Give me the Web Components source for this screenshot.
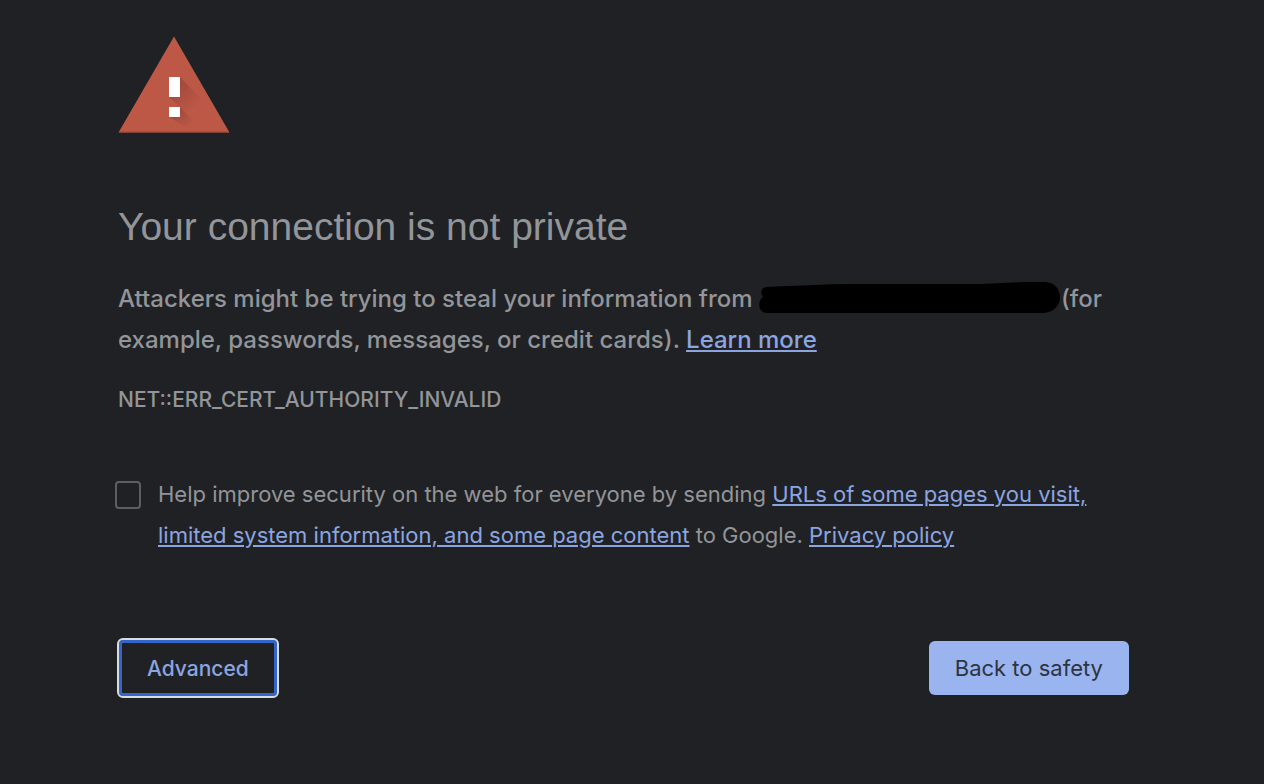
<!DOCTYPE html>
<html lang="en">
<head>
<meta charset="utf-8">
<meta name="viewport" content="width=device-width, initial-scale=1">
<title>Privacy error</title>
<style>
  html { background: #202124; }
  body {
    margin: 0;
    color: #929599;
    font-family: Inter, "Liberation Sans", sans-serif;
    font-weight: 500;
    --link: #8ba5e0;
    --primary: #9ab4f0;
  }
</style>
</head>
<body>
<security-interstitial></security-interstitial>

<script>
class ShadowElement extends HTMLElement {
  constructor() {
    super();
    const template = document.createElement('template');
    template.innerHTML = this.constructor.markup;
    this.attachShadow({ mode: 'open' }).append(template.content.cloneNode(true));
  }
}

class WarningIcon extends ShadowElement {
  static markup = `
    <style>
      :host { display: block; width: 112px; height: 97px; }
      svg { display: block; width: 100%; height: 100%; }
    </style>
    <svg viewBox="0 0 112 97" aria-hidden="true">
      <defs>
        <linearGradient id="shade" gradientUnits="userSpaceOnUse" x1="58" y1="50" x2="77" y2="72">
          <stop offset="0" stop-color="#8f3f34" stop-opacity=".6"/>
          <stop offset="1" stop-color="#8f3f34" stop-opacity="0"/>
        </linearGradient>
        <linearGradient id="shade-dot" gradientUnits="userSpaceOnUse" x1="58" y1="76" x2="70" y2="92">
          <stop offset="0" stop-color="#8f3f34" stop-opacity=".6"/>
          <stop offset="1" stop-color="#8f3f34" stop-opacity="0"/>
        </linearGradient>
      </defs>
      <path d="M56 0.500 111.500 96.500H0.500Z" fill="#bd5847"/>
      <path d="M62 41 84 64 80 88 51 61Z" fill="url(#shade)"/>
      <path d="M62 71 82 92V96H76L51 81Z" fill="url(#shade-dot)"/>
      <path d="M51 41H62V61H51ZM51 71H62V81H51Z" fill="#fff"/>
      <path d="M1 96H111" stroke="#9d4739"/>
    </svg>`;
}
customElements.define('warning-icon', WarningIcon);

class RedactedText extends ShadowElement {
  static markup = `
    <style>
      :host { display: inline-block; width: 302px; height: 32px; vertical-align: -7px; }
      svg { display: block; width: 100%; height: 100%; }
    </style>
    <svg viewBox="0 0 302 32" aria-hidden="true">
      <path d="M7 5 C35 4 65 2 95 2 H215 C240 2 250 0 275 0 H287 C306 2 306 29 285 31 H8 C-1 31 -2 19 4 15 C1 11 2 6 7 5Z"/>
    </svg>`;
}
customElements.define('redacted-text', RedactedText);

class TextLink extends ShadowElement {
  static markup = `
    <style>
      :host { display: inline; }
      a { color: var(--link); text-decoration: underline; text-decoration-thickness: 2px; text-underline-offset: 2px; }
    </style><a href="#"><slot></slot></a>`;
}
customElements.define('text-link', TextLink);

class ActionButton extends ShadowElement {
  static markup = `
    <style>
      :host { display: block; }
      button {
        display: block; box-sizing: border-box; height: 54px; padding: 0 26px;
        border: 0; border-radius: 6px;
        background: var(--primary); color: #2d3342;
        font: inherit; font-size: 22px; font-weight: 400; cursor: pointer;
      }
      :host([secondary]) { margin-left: -1px; }
      :host([secondary]) button {
        height: 60px; padding: 0 28px;
        border: 2px solid #d9dce3; box-shadow: inset 0 0 0 3px #3465c8;
        background: transparent; color: var(--link);
        font-size: 21px; font-weight: 500;
      }
    </style><button type="button"><slot></slot></button>`;
}
customElements.define('action-button', ActionButton);

class ReportingOptIn extends ShadowElement {
  static markup = `
    <style>
      :host { display: flex; align-items: flex-start; gap: 17px; font-size: 22px; font-weight: 400; line-height: 41px; }
      input {
        appearance: none; box-sizing: border-box; flex: none;
        width: 26px; height: 28px; margin: 7px 0 0 -3px;
        border: 2px solid #5c5e62; border-radius: 4px; background: transparent;
      }
      input:checked { background: var(--link); }
      label { padding-right: 24px; }
    </style>
    <input type="checkbox" id="opt-in">
    <label for="opt-in"><slot></slot></label>`;
}
customElements.define('reporting-opt-in', ReportingOptIn);

class SecurityInterstitial extends ShadowElement {
  static markup = `
    <style>
      :host { display: block; padding: 36px 135px 84px 118px; }
      h1 { margin: 70px 0 27px; font-family: "Liberation Sans", Arial, sans-serif; font-size: 39px; font-weight: 400; line-height: 48px; }
      p { margin: 0; font-size: 24px; line-height: 41px; }
      .code { margin-top: 19px; font-size: 21px; }
      reporting-opt-in { margin-top: 54px; }
      nav { display: flex; justify-content: space-between; align-items: center; margin-top: 82px; }
    </style>
    <main>
      <warning-icon></warning-icon>
      <h1>Your connection is not private</h1>
      <p>Attackers might be trying to steal your information from <redacted-text></redacted-text>(for example, passwords, messages, or credit cards). <text-link>Learn more</text-link></p>
      <p class="code">NET::ERR_CERT_AUTHORITY_INVALID</p>
      <reporting-opt-in>Help improve security on the web for everyone by sending <text-link>URLs of some pages you visit, limited system information, and some page content</text-link> to Google. <text-link>Privacy policy</text-link></reporting-opt-in>
      <nav aria-label="Page actions">
        <action-button secondary>Advanced</action-button>
        <action-button>Back to safety</action-button>
      </nav>
    </main>`;
}
customElements.define('security-interstitial', SecurityInterstitial);
</script>
</body>
</html>
